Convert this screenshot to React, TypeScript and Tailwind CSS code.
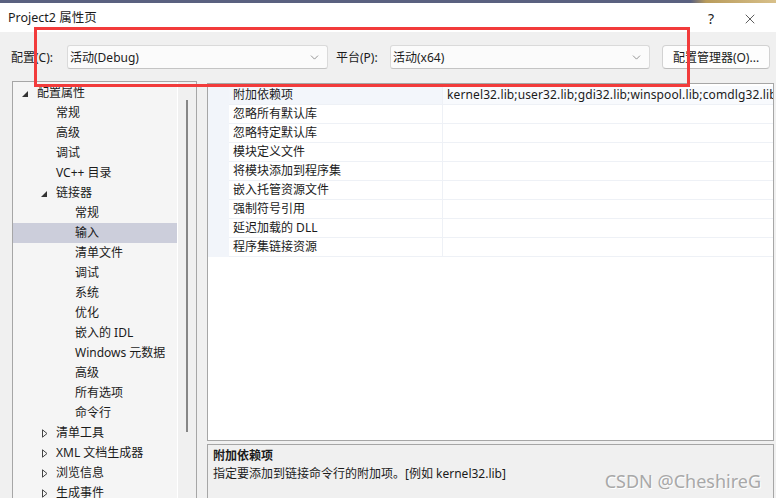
import { ChevronDown, X } from "lucide-react";

type Node = { t: string; lvl: 0 | 1 | 2; tri?: "open" | "closed"; sel?: boolean };

const tree: Node[] = [
  { t: "配置属性", lvl: 0, tri: "open" },
  { t: "常规", lvl: 1 },
  { t: "高级", lvl: 1 },
  { t: "调试", lvl: 1 },
  { t: "VC++ 目录", lvl: 1 },
  { t: "链接器", lvl: 1, tri: "open" },
  { t: "常规", lvl: 2 },
  { t: "输入", lvl: 2, sel: true },
  { t: "清单文件", lvl: 2 },
  { t: "调试", lvl: 2 },
  { t: "系统", lvl: 2 },
  { t: "优化", lvl: 2 },
  { t: "嵌入的 IDL", lvl: 2 },
  { t: "Windows 元数据", lvl: 2 },
  { t: "高级", lvl: 2 },
  { t: "所有选项", lvl: 2 },
  { t: "命令行", lvl: 2 },
  { t: "清单工具", lvl: 1, tri: "closed" },
  { t: "XML 文档生成器", lvl: 1, tri: "closed" },
  { t: "浏览信息", lvl: 1, tri: "closed" },
  { t: "生成事件", lvl: 1, tri: "closed" },
];

const indent = ["pl-[9px]", "pl-[28px]", "pl-[47px]"];

const props = [
  "附加依赖项",
  "忽略所有默认库",
  "忽略特定默认库",
  "模块定义文件",
  "将模块添加到程序集",
  "嵌入托管资源文件",
  "强制符号引用",
  "延迟加载的 DLL",
  "程序集链接资源",
];

function Triangle({ kind }: { kind: "open" | "closed" }) {
  if (kind === "open") {
    return (
      <svg width="6" height="6" viewBox="0 0 6 6" className="mt-[1px]">
        <path d="M6 0 L6 6 L0 6 Z" fill="#333" />
      </svg>
    );
  }
  return (
    <svg width="6" height="9" viewBox="0 0 6 9" className="ml-[1px]">
      <path d="M0.5 0.8 L5 4.5 L0.5 8.2 Z" fill="none" stroke="#444" strokeWidth="1" />
    </svg>
  );
}

function Combo({ value, width }: { value: string; width: string }) {
  return (
    <div
      className={`${width} flex h-6 items-center justify-between rounded-[3px] border border-[#dadada] border-b-[#c4c4c4] bg-[#fbfbfb] pl-[2px] pr-[6px]`}
    >
      <span className="pt-[1px]">{value}</span>
      <ChevronDown size={13} strokeWidth={1.2} className="text-[#5f5f5f]" />
    </div>
  );
}

export default function App() {
  return (
    <div className="relative flex h-[498px] w-[776px] flex-col overflow-hidden bg-[#f0f0f0] font-['Noto_Sans','Noto_Sans_CJK_SC',sans-serif] text-[12px] leading-none text-[#1b1b1b]">
      {/* desktop strip behind the window */}
      <div className="h-[3px] shrink-0 bg-[linear-gradient(90deg,#5a6180_0%,#5a6180_89%,#b99c5c_91%,#d8c08a_100%)]" />

      {/* title bar */}
      <div className="flex h-[29px] shrink-0 items-center bg-white pl-2 pr-[18px] pt-[2px]">
        <span className="text-[12.5px]">Project2 属性页</span>
        <span className="ml-auto mr-[28px] text-[14px] text-[#222]">?</span>
        <X size={16} strokeWidth={1.1} className="text-[#222]" />
      </div>

      {/* config row */}
      <div className="mt-[13px] flex h-6 shrink-0 items-center">
        <span className="ml-[11px] w-[56px] pt-[1px]">配置(C):</span>
        <Combo value="活动(Debug)" width="w-[261px]" />
        <span className="ml-[8px] w-[54px] pt-[1px]">平台(P):</span>
        <Combo value="活动(x64)" width="w-[260px]" />
        <div className="ml-[12px] flex h-6 w-[108px] items-center justify-center rounded-[4px] border border-[#d2d2d2] border-b-[#bdbdbd] bg-[#fdfdfd] pt-[1px]">
          配置管理器(O)...
        </div>
      </div>

      {/* main */}
      <div className="mt-[12px] flex min-h-0 flex-1 pl-[12px]">
        {/* tree */}
        <div className="flex h-[440px] w-[185px] shrink-0 border border-b-0 border-[#a6a6a6]">
          <div className="w-[165px] shrink-0 border-r border-white bg-[#f5f5f5] pt-[1px]">
            {tree.map((n, i) => (
              <div
                key={i}
                className={`flex h-5 items-center ${indent[n.lvl]} ${n.sel ? "bg-[#cccedb]" : ""}`}
              >
                <div className="flex w-[15px] items-center">{n.tri && <Triangle kind={n.tri} />}</div>
                <span>{n.t}</span>
              </div>
            ))}
          </div>
          <div className="flex flex-1 justify-center bg-[#f0f0f0] pt-[18px]">
            <div className="ml-[-1px] h-[332px] w-[2px] bg-[#868686]" />
          </div>
        </div>

        {/* right column */}
        <div className="ml-[10px] mt-[2px] flex w-[567px] shrink-0 flex-col">
          <div className="h-[358px] shrink-0 border border-[#a6a6a6] bg-white pt-[2px]">
            {props.map((p, i) => (
              <div key={i} className="flex h-[19px]">
                <div className="w-[21px] shrink-0 bg-[#f2f5fa]" />
                <div
                  className={`flex w-[214px] shrink-0 items-center border-b border-r border-[#eef1f6] pl-[4px] ${i === 0 ? "bg-[#f3f6fb]" : "bg-white"}`}
                >
                  {p}
                </div>
                <div
                  className={`flex min-w-0 flex-1 items-center overflow-hidden whitespace-nowrap border-b border-[#eef1f6] pl-[4px] tracking-[0.12px] ${i === 0 ? "bg-[#f8fafd]" : "bg-white"}`}
                >
                  {i === 0 && "kernel32.lib;user32.lib;gdi32.lib;winspool.lib;comdlg32.lib;advapi32.lib"}
                </div>
              </div>
            ))}
          </div>

          <div className="relative mt-[3px] h-[80px] shrink-0 border border-[#a6a6a6] bg-[#f0f0f0] px-[5px] pt-[5px]">
            <div className="font-bold">附加依赖项</div>
            <div className="mt-[6px]">指定要添加到链接命令行的附加项。[例如 kernel32.lib]</div>
            <span className="absolute right-[12px] top-[27px] text-[18px] text-[#a8a8a8] [text-shadow:1px_1px_0_#ffffff]">
              CSDN @CheshireG
            </span>
          </div>
        </div>
      </div>

      {/* annotation rectangle */}
      <div className="absolute left-[34px] top-[27px] h-[60px] w-[656px] border-[3px] border-[#f23b3b]" />
    </div>
  );
}
